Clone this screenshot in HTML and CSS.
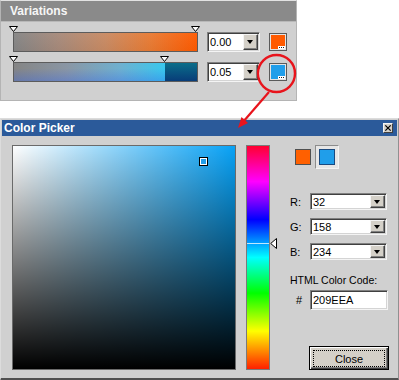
FILE: index.html
```html
<!DOCTYPE html>
<html>
<head>
<meta charset="utf-8">
<link rel="stylesheet" href="styles.css">
</head>
<body>
<div class="panel">
  <div class="panel-head">Variations</div>
  <div class="panel-body">
    <div class="vrow">
      <div class="track">
        <svg class="stop" style="left:-4px" width="9" height="6" viewBox="0 0 9 6"><polygon points="0.5,0.5 8.5,0.5 4.5,5.5" fill="#fff" stroke="#000" stroke-width="1"/></svg>
        <svg class="stop" style="left:178px" width="9" height="6" viewBox="0 0 9 6"><polygon points="0.5,0.5 8.5,0.5 4.5,5.5" fill="#fff" stroke="#000" stroke-width="1"/></svg>
        <div class="bar bar-orange"></div>
      </div>
      <div class="combo combo-sm"><span class="combo-val">0.00</span><span class="combo-btn"></span></div>
      <div class="swatch-btn"><span class="swatch-fill fill-orange"></span><span class="dots"></span></div>
    </div>
    <div class="vrow">
      <div class="track">
        <svg class="stop" style="left:-4px" width="9" height="6" viewBox="0 0 9 6"><polygon points="0.5,0.5 8.5,0.5 4.5,5.5" fill="#fff" stroke="#000" stroke-width="1"/></svg>
        <svg class="stop" style="left:147px" width="9" height="6" viewBox="0 0 9 6"><polygon points="0.5,0.5 8.5,0.5 4.5,5.5" fill="#fff" stroke="#000" stroke-width="1"/></svg>
        <div class="bar bar-blue"><span class="seg-light"></span><span class="seg-dark"></span></div>
      </div>
      <div class="combo combo-sm"><span class="combo-val">0.05</span><span class="combo-btn"></span></div>
      <div class="swatch-btn"><span class="swatch-fill fill-blue"></span><span class="dots"></span></div>
    </div>
  </div>
</div>

<div class="picker">
  <div class="titlebar">
    <span class="title">Color Picker</span>
    <span class="xbtn"><svg width="9" height="8" viewBox="0 0 9 8"><path d="M1.5 1 L7.5 7 M7.5 1 L1.5 7" stroke="#000" stroke-width="1.4"/></svg></span>
  </div>
  <div class="picker-body">
    <div class="sv"><span class="sv-cursor"></span></div>
    <div class="hue">
      <span class="hue-line"></span>
      <svg class="hue-arrow" width="7" height="11" viewBox="0 0 7 11"><polygon points="0.7,5.5 6.5,0.5 6.5,10.5" fill="#fff" stroke="#000" stroke-width="1"/></svg>
    </div>
    <div class="controls">
      <div class="swatches">
        <span class="sw-old"></span>
        <span class="sw-new"><span class="sw-new-fill"></span></span>
      </div>
      <div class="field-row first">
        <span class="lbl">R:</span>
        <div class="combo combo-rgb"><span class="combo-val">32</span><span class="combo-btn"></span></div>
      </div>
      <div class="field-row">
        <span class="lbl">G:</span>
        <div class="combo combo-rgb"><span class="combo-val">158</span><span class="combo-btn"></span></div>
      </div>
      <div class="field-row">
        <span class="lbl">B:</span>
        <div class="combo combo-rgb"><span class="combo-val">234</span><span class="combo-btn"></span></div>
      </div>
      <div class="html-label">HTML Color Code:</div>
      <div class="field-row hex-row">
        <span class="lbl hash">#</span>
        <div class="text-field">209EEA</div>
      </div>
      <div class="close-btn"><span class="close-focus">Close</span></div>
    </div>
  </div>
</div>

<svg class="callout" width="399" height="380" viewBox="0 0 399 380">
  <circle cx="276.5" cy="73.5" r="18.5" fill="none" stroke="#e8141c" stroke-width="2.4"/>
  <line x1="269" y1="92" x2="243" y2="122" stroke="#e8141c" stroke-width="2.2"/>
  <polygon points="238,128 248,123 241.5,117" fill="#e8141c"/>
</svg>
</body>
</html>
```

FILE: styles.css
```css
html, body {
  margin: 0;
  padding: 0;
}
body {
  background: #fff;
  font-family: "Liberation Sans", Arial, sans-serif;
  width: 399px;
  height: 380px;
  overflow: hidden;
  position: relative;
}

/* ---------- Variations panel ---------- */
.panel {
  width: 297px;
  height: 101px;
  box-sizing: border-box;
  border: 1px solid #b4b4b4;
  border-top-color: #e2e2e2;
  background: #d0d0d0;
}
.panel-head {
  height: 20px;
  line-height: 20px;
  background: #8a8a8a;
  border-bottom: 1px solid #b8b8b8;
  color: #f6f6f6;
  font-weight: bold;
  font-size: 12px;
  padding-left: 9px;
}
.panel-body {
  padding: 4px 0 0 12px;
  display: flex;
  flex-direction: column;
  gap: 4px;
}
.vrow {
  display: flex;
  align-items: flex-end;
}
.track {
  position: relative;
  padding-top: 6px;
  width: 185px;
}
.stop {
  position: absolute;
  top: 0;
  display: block;
}
.bar {
  height: 20px;
  box-sizing: border-box;
  border: 1px solid #5c5c5c;
}
.bar-orange {
  background:
    linear-gradient(to bottom, rgba(255,255,255,0.04), rgba(0,0,0,0.03)),
    linear-gradient(to right, #858585 0%, #a88a7a 25%, #c98a62 50%, #e97a32 75%, #ff5a00 100%);
}
.bar-blue {
  display: flex;
}
.seg-light {
  width: 151px;
  background:
    linear-gradient(to bottom, rgba(60,110,230,0) 30%, rgba(50,100,235,0.35) 100%),
    linear-gradient(to right, #858585 0%, #8a96a4 35%, #6fb0cf 70%, #38c8ee 100%);
}
.seg-dark {
  flex: 1;
  background: linear-gradient(to bottom, #0a6e8a, #083c78);
}

/* combo boxes */
.combo {
  display: flex;
  box-sizing: border-box;
  background: #fff;
  border: 1px solid;
  border-color: #808080 #f4f4f4 #f4f4f4 #808080;
  box-shadow: inset 1px 1px 0 #404040, inset -1px -1px 0 #d4d4d4;
  padding: 1px;
}
.combo-val {
  flex: 1;
  font-size: 11px;
  color: #000;
  display: flex;
  align-items: center;
  padding-left: 1px;
}
.combo-btn {
  width: 15px;
  box-sizing: border-box;
  background: #d4d0c8;
  border: 1px solid;
  border-color: #f4f4f4 #404040 #404040 #f4f4f4;
  box-shadow: inset -1px -1px 0 #808080;
  position: relative;
}
.combo-btn::after {
  content: "";
  position: absolute;
  left: 50%;
  top: 50%;
  margin-left: -4px;
  margin-top: -2px;
  border-left: 3.5px solid transparent;
  border-right: 3.5px solid transparent;
  border-top: 4px solid #000;
}
.combo-sm {
  width: 53px;
  height: 20px;
  margin-left: 9px;
}

.swatch-btn {
  width: 18px;
  height: 18px;
  box-sizing: border-box;
  border: 1px solid #5a5a5a;
  padding: 1px;
  background: #e4e4e4;
  margin-left: 9px;
  margin-bottom: 1px;
  position: relative;
}
.swatch-fill {
  display: block;
  width: 100%;
  height: 100%;
}
.fill-orange { background: #ff5a00; }
.fill-blue { background: #209eea; }
.dots {
  position: absolute;
  right: 1px;
  bottom: 1px;
  width: 7px;
  height: 3px;
  background-color: #fff;
  background-image: linear-gradient(to right, #222 1px, transparent 1px);
  background-size: 2px 1px;
  background-position: 1px 1px;
  background-repeat: repeat-x;
}

/* ---------- Color Picker window ---------- */
.picker {
  margin-top: 17px;
  box-sizing: border-box;
  width: 399px;
  border: 1px solid;
  border-color: #dcdcdc #909090 #505050 #dcdcdc;
  border-bottom-width: 3px;
  padding: 1px;
  background: #d0d0d0;
}
.titlebar {
  height: 16px;
  background: #2b5a9a;
  display: flex;
  align-items: center;
  justify-content: space-between;
  padding: 0 4px 0 2px;
}
.title {
  color: #fff;
  font-weight: bold;
  font-size: 12px;
}
.xbtn {
  width: 10px;
  height: 10px;
  box-sizing: border-box;
  background: #d4d0c8;
  border: 1px solid;
  border-color: #f4f4f4 #404040 #404040 #f4f4f4;
  display: flex;
  align-items: center;
  justify-content: center;
}
.xbtn svg { display: block; }

.picker-body {
  display: flex;
  padding: 9px 0 7px 10px;
}
.sv {
  width: 224px;
  height: 225px;
  box-sizing: border-box;
  border: 1px solid #6a6a6a;
  position: relative;
  background:
    linear-gradient(to top, #000 0%, rgba(0,0,0,0) 100%),
    linear-gradient(to right, #fff 0%, rgba(255,255,255,0) 100%),
    #08a2f6;
}
.sv-cursor {
  position: absolute;
  left: 186px;
  top: 11px;
  width: 9px;
  height: 9px;
  box-sizing: border-box;
  border: 1px solid #000;
  box-shadow: inset 0 0 0 1px #fff;
  background: #209eea;
}
.hue {
  margin-left: 10px;
  width: 24px;
  height: 225px;
  box-sizing: border-box;
  border: 1px solid #7a7a7a;
  position: relative;
  background: linear-gradient(to bottom, #ff0030 0%, #ff00ff 16%, #0000ff 33%, #00ffff 50%, #00ff00 66%, #ffff00 83%, #ff2000 100%);
}
.hue-line {
  position: absolute;
  left: 0;
  right: 0;
  top: 97px;
  height: 1px;
  background: rgba(255,255,255,0.75);
}
.hue-arrow {
  position: absolute;
  left: 23px;
  top: 92px;
  display: block;
}

.controls {
  margin-left: 20px;
  display: flex;
  flex-direction: column;
  font-size: 11px;
  color: #000;
}
.swatches {
  display: flex;
  align-items: flex-start;
  margin-left: 5px;
}
.sw-old {
  margin-top: 4px;
  width: 16px;
  height: 16px;
  box-sizing: border-box;
  border: 1px solid #505050;
  background: #ff6000;
}
.sw-new {
  margin-left: 4px;
  width: 24px;
  height: 24px;
  box-sizing: border-box;
  border: 1px solid;
  border-color: #8c8c8c #f4f4f4 #f4f4f4 #8c8c8c;
  background: #e6e6e6;
  padding: 3px;
}
.sw-new-fill {
  display: block;
  width: 16px;
  height: 16px;
  box-sizing: border-box;
  border: 1px solid #1a4a80;
  background: #209eea;
}
.field-row {
  display: flex;
  align-items: center;
  margin-top: 8px;
}
.field-row.first {
  margin-top: 24px;
}
.lbl {
  width: 20px;
  font-size: 11px;
}
.combo-rgb {
  width: 77px;
  height: 17px;
}
.html-label {
  margin-top: 14px;
  font-size: 10.5px;
  line-height: 13px;
}
.hex-row {
  margin-top: 3px;
}
.hash {
  padding-left: 6px;
  box-sizing: border-box;
}
.text-field {
  width: 78px;
  height: 20px;
  box-sizing: border-box;
  background: #fff;
  border: 1px solid;
  border-color: #808080 #f4f4f4 #f4f4f4 #808080;
  box-shadow: inset 1px 1px 0 #404040, inset -1px -1px 0 #d4d4d4;
  display: flex;
  align-items: center;
  padding-left: 2px;
  font-size: 11px;
}
.close-btn {
  margin-top: auto;
  margin-left: 19px;
  width: 80px;
  height: 24px;
  box-sizing: border-box;
  border: 1px solid #000;
  background: #d4d0c8;
  box-shadow: inset 1px 1px 0 #fff, inset -1px -1px 0 #404040, inset -2px -2px 0 #808080;
  padding: 3px 3px 2px 3px;
  display: flex;
}
.close-focus {
  flex: 1;
  border: 1px dotted #000;
  display: flex;
  align-items: center;
  justify-content: center;
  font-size: 11px;
}

.callout {
  position: absolute;
  left: 0;
  top: 0;
  pointer-events: none;
}
```
